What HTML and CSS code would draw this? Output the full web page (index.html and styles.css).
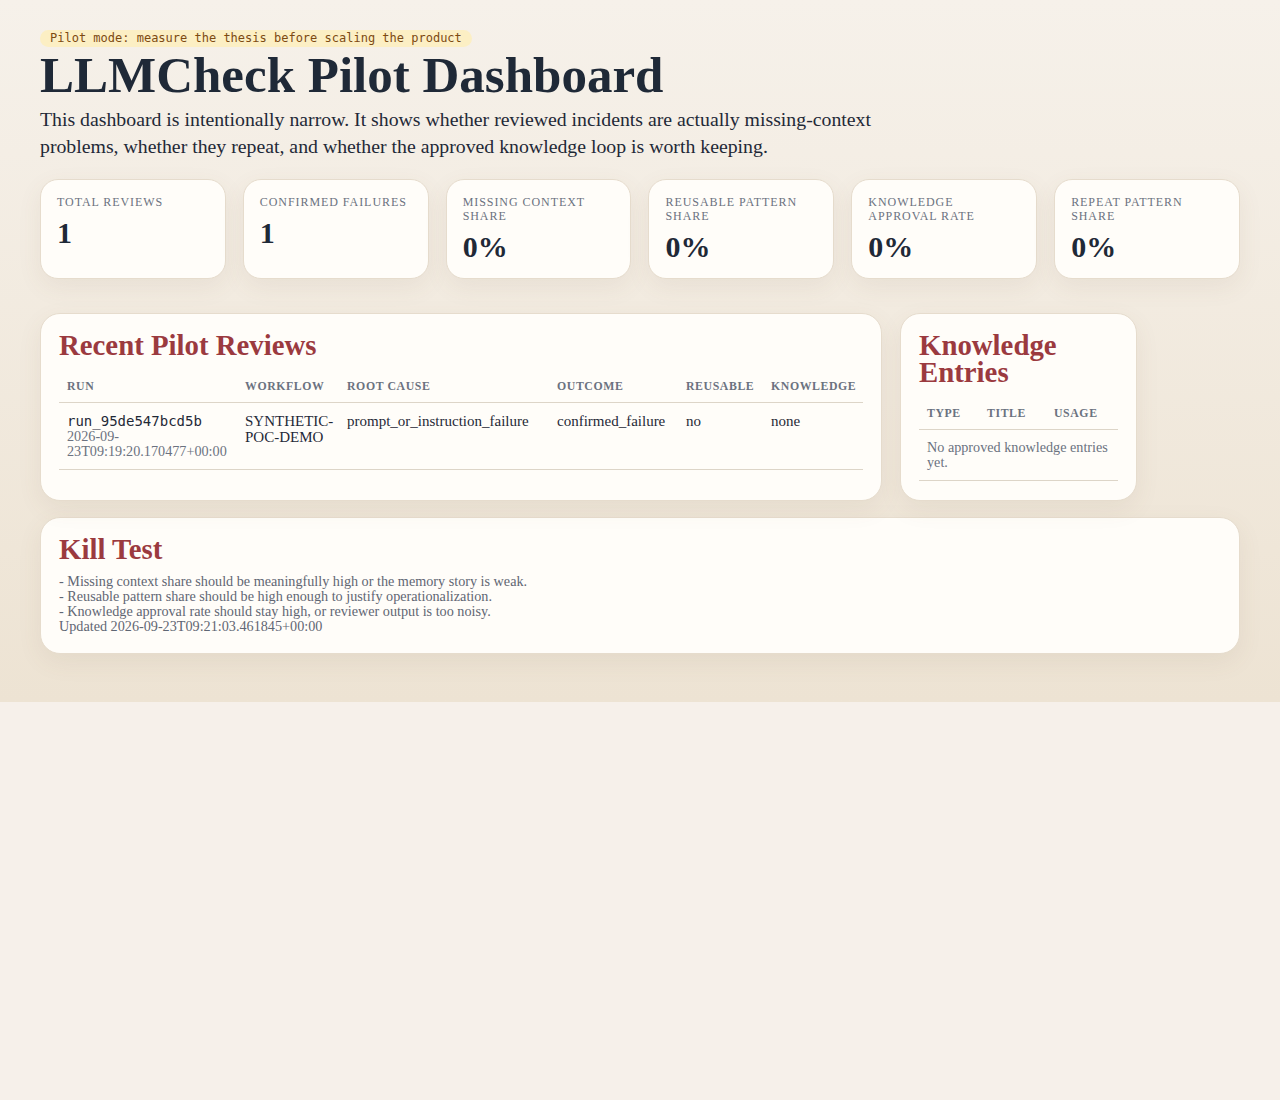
FILE: index.html
```html
<!DOCTYPE html>
<html lang="en">
<head>
<meta charset="utf-8">
<title>LLMCheck Pilot Dashboard</title>
<link rel="stylesheet" href="styles.css">
</head>
<body>
<main class="page">
  <header class="hero">
    <span class="badge">Pilot mode: measure the thesis before scaling the product</span>
    <h1 class="title">LLMCheck Pilot Dashboard</h1>
    <p class="lede">This dashboard is intentionally narrow. It shows whether reviewed incidents are actually missing-context problems, whether they repeat, and whether the approved knowledge loop is worth keeping.</p>
  </header>

  <section class="stats">
    <div class="stat"><div class="stat-label">Total Reviews</div><div class="stat-value">1</div></div>
    <div class="stat"><div class="stat-label">Confirmed Failures</div><div class="stat-value">1</div></div>
    <div class="stat"><div class="stat-label">Missing Context Share</div><div class="stat-value">0%</div></div>
    <div class="stat"><div class="stat-label">Reusable Pattern Share</div><div class="stat-value">0%</div></div>
    <div class="stat"><div class="stat-label">Knowledge Approval Rate</div><div class="stat-value">0%</div></div>
    <div class="stat"><div class="stat-label">Repeat Pattern Share</div><div class="stat-value">0%</div></div>
  </section>

  <section class="panels">
    <div class="panel">
      <h2 class="panel-title">Recent Pilot Reviews</h2>
      <table class="table reviews">
        <thead>
          <tr><th class="c-run">Run</th><th class="c-wf">Workflow</th><th class="c-rc">Root Cause</th><th class="c-out">Outcome</th><th class="c-re">Reusable</th><th class="c-kn">Knowledge</th></tr>
        </thead>
        <tbody>
          <tr>
            <td><div class="mono">run_95de547bcd5b</div><div class="muted">2026-09-23T09:19:20.170477+00:00</div></td>
            <td>SYNTHETIC-POC-DEMO</td>
            <td>prompt_or_instruction_failure</td>
            <td>confirmed_failure</td>
            <td>no</td>
            <td>none</td>
          </tr>
        </tbody>
      </table>
    </div>
    <div class="panel">
      <h2 class="panel-title">Knowledge Entries</h2>
      <table class="table entries">
        <thead>
          <tr><th class="c-type">Type</th><th class="c-title">Title</th><th class="c-usage">Usage</th></tr>
        </thead>
        <tbody>
          <tr><td colspan="3" class="muted">No approved knowledge entries yet.</td></tr>
        </tbody>
      </table>
    </div>
  </section>

  <section class="panel kill">
    <h2 class="panel-title">Kill Test</h2>
    <div class="kill-text">
      <div>- Missing context share should be meaningfully high or the memory story is weak.</div>
      <div>- Reusable pattern share should be high enough to justify operationalization.</div>
      <div>- Knowledge approval rate should stay high, or reviewer output is too noisy.</div>
      <div>Updated 2026-09-23T09:21:03.461845+00:00</div>
    </div>
  </section>
</main>
</body>
</html>
```

FILE: styles.css
```css
html {
  background: #f6f0ea;
}
body {
  margin: 0;
  font-family: "Liberation Serif", serif;
  color: #1f2937;
  background: linear-gradient(180deg, #f6f1ea 0%, #ede3d3 100%);
}
.page {
  padding: 30px 40px 48px;
}
.hero {
  display: flex;
  flex-direction: column;
  align-items: flex-start;
}
.badge {
  display: inline-block;
  font-family: "DejaVu Sans Mono", monospace;
  font-size: 12px;
  line-height: 17px;
  color: #7c4a12;
  background: #fcefc4;
  padding: 0 10px;
  border-radius: 999px;
}
.title {
  margin: 0;
  font-size: 51px;
  line-height: 56px;
  font-weight: 700;
  color: #1f2937;
}
.lede {
  margin: 3px 0 0;
  max-width: 880px;
  font-size: 19.8px;
  line-height: 27px;
}
.stats {
  margin-top: 19px;
  display: grid;
  grid-template-columns: repeat(6, 1fr);
  gap: 17px;
}
.stat {
  background: #fffdf9;
  border: 1px solid #e6dccd;
  border-radius: 18px;
  padding: 15px 16px 14px;
  box-shadow: 0 8px 24px rgba(120, 95, 60, 0.08);
}
.stat-label {
  font-size: 12px;
  line-height: 14px;
  letter-spacing: 0.078em;
  text-transform: uppercase;
  color: #6b7280;
}
.stat-value {
  margin-top: 7px;
  font-size: 30px;
  line-height: 34px;
  font-weight: 700;
  color: #1f2937;
}
.panels {
  margin-top: 34px;
  display: grid;
  grid-template-columns: 842px 237px;
  gap: 18px;
}
.panel {
  background: #fffdf9;
  border: 1px solid #e6dccd;
  border-radius: 20px;
  padding: 18px 18px 19px;
  box-shadow: 0 8px 24px rgba(120, 95, 60, 0.08);
}
.panel-title {
  margin: 0 0 11px;
  font-size: 28.8px;
  line-height: 27px;
  font-weight: 700;
  color: #9b3a3f;
}
.table {
  width: 100%;
  border-collapse: collapse;
  table-layout: fixed;
}
.table th {
  text-align: left;
  font-size: 11.8px;
  line-height: 14px;
  font-weight: 700;
  letter-spacing: 0.05em;
  text-transform: uppercase;
  color: #6b7280;
  padding: 9px 8px;
  border-bottom: 1px solid #ddd5c8;
  white-space: nowrap;
}
.table td {
  vertical-align: top;
  text-align: left;
  font-size: 15px;
  line-height: 16px;
  padding: 10px 8px;
  border-bottom: 1px solid #ddd5c8;
}
.reviews .c-run { width: 162px; }
.reviews .c-wf { width: 86px; }
.reviews .c-rc { width: 194px; }
.reviews .c-out { width: 113px; }
.reviews .c-re { width: 69px; }
.reviews .c-kn { width: auto; }
.entries .c-type { width: 44px; }
.entries .c-title { width: 51px; }
.entries .c-usage { width: auto; }
.mono {
  font-family: "DejaVu Sans Mono", monospace;
  font-size: 14px;
  line-height: 16px;
}
.muted {
  color: #6b7280;
  font-size: 14.2px;
  line-height: 15px;
}
.table td.muted {
  font-size: 14.2px;
  line-height: 15px;
}
.kill {
  margin-top: 16px;
}
.kill-text {
  font-size: 14.2px;
  line-height: 15px;
  color: #5f6673;
}
```
